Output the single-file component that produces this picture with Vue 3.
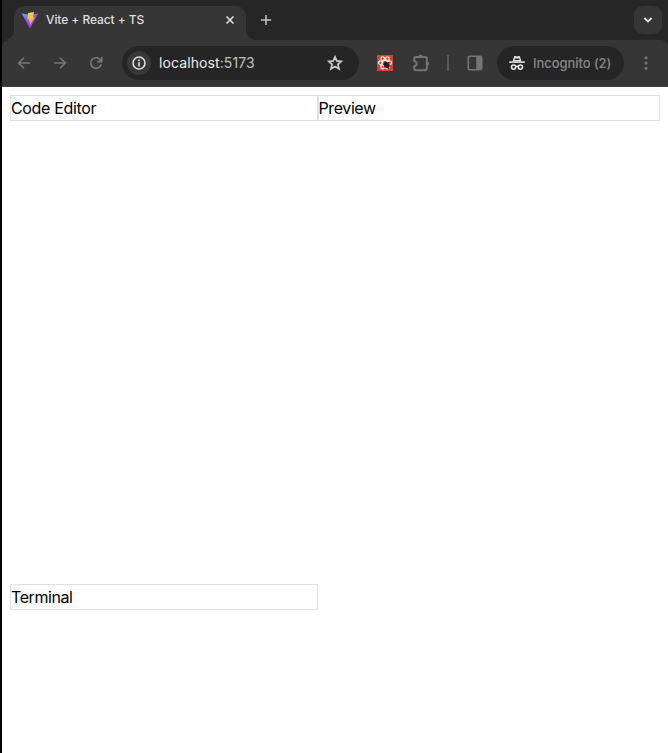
<script setup>
const title = 'Vite + React + TS'
</script>

<template>
  <div class="window">
    <header class="tabstrip">
      <div class="tab">
        <svg class="vite" width="18" height="18" viewBox="0 0 18 18">
          <defs>
            <linearGradient id="va" x1="0" y1="0" x2="0.6" y2="1">
              <stop offset="0" stop-color="#41c5ff" />
              <stop offset="0.4" stop-color="#7d62ff" />
              <stop offset="1" stop-color="#b62cfa" />
            </linearGradient>
            <linearGradient id="vb" x1="0" y1="0" x2="0" y2="1">
              <stop offset="0" stop-color="#ffd24a" />
              <stop offset="1" stop-color="#ffa313" />
            </linearGradient>
          </defs>
          <path d="M1 2.4 L9 3.8 L17 2.4 Q17.3 2.4 17 3.1 L9.4 16.7 Q9 17.2 8.6 16.7 L1 3.1 Q.7 2.4 1 2.4Z" fill="url(#va)" />
          <path d="M13 1 L7 2.1 L6.4 8.7 L8.3 8.3 L7.8 11.1 L9.3 10.7 L8.8 14.2 L13.8 6.5 L12 6.8 L13 1Z" fill="url(#vb)" />
        </svg>
        <span class="tab-title">{{ title }}</span>
        <svg class="close" width="10" height="10" viewBox="0 0 10 10"><path d="M1.5 1.5 L8.5 8.5 M8.5 1.5 L1.5 8.5" stroke="#dedede" stroke-width="1.6" fill="none" /></svg>
      </div>
      <svg class="plus" width="12" height="12" viewBox="0 0 12 12"><path d="M6 .9V11.1M.9 6H11.1" stroke="#c4c4c4" stroke-width="1.5" /></svg>
      <button class="tab-search">
        <svg width="10" height="8" viewBox="0 0 10 8"><path d="M1.4 2 L5 5.6 L8.6 2" fill="none" stroke="#e6e6e6" stroke-width="1.8" /></svg>
      </button>
    </header>

    <div class="toolbar">
      <nav class="nav">
        <svg width="16" height="16" viewBox="0 0 16 16"><path d="M14 8H3M8 2.7 L2.7 8 L8 13.3" /></svg>
        <svg width="16" height="16" viewBox="0 0 16 16"><path d="M2 8H13M8 2.7 L13.3 8 L8 13.3" /></svg>
        <svg width="16" height="16" viewBox="0 0 16 16"><path d="M13.2 9.2 A5.3 5.3 0 1 1 12.4 5 L13.5 6.3 M13.7 2V6.6H9.2" /></svg>
      </nav>
      <div class="omnibox">
        <span class="info">
          <svg width="14" height="14" viewBox="0 0 14 14"><circle cx="7" cy="7" r="6" fill="none" stroke="#dedede" stroke-width="1.6" /><path d="M7 6.2V10.4M7 3.5V5" stroke="#dedede" stroke-width="1.7" /></svg>
        </span>
        <span class="url">localhost<span class="port">:5173</span></span>
        <svg class="star" width="16" height="16" viewBox="0 0 16 16"><path d="M8 1.9 L9.8 6 L14.3 6.4 L10.9 9.4 L12 13.9 L8 11.5 L4 13.9 L5.1 9.4 L1.7 6.4 L6.2 6Z" fill="none" stroke="#c9c9c9" stroke-width="1.8" /></svg>
      </div>
      <svg class="ext" width="16" height="16" viewBox="0 0 16 16">
        <rect width="16" height="16" fill="#d8422f" />
        <g fill="none" stroke="#f7e8e6" stroke-width="1.3">
          <ellipse cx="8" cy="7.8" rx="6.6" ry="2.5" />
          <ellipse cx="8" cy="7.8" rx="6.6" ry="2.5" transform="rotate(60 8 7.8)" />
          <ellipse cx="8" cy="7.8" rx="6.6" ry="2.5" transform="rotate(120 8 7.8)" />
        </g>
        <ellipse cx="9.6" cy="10" rx="2.5" ry="3.4" transform="rotate(-35 9.6 10)" fill="#282020" />
        <path d="M6 9.2L13.2 10.3M7 12.4L12 7.2M8.1 6.4L11.6 13.9" stroke="#282020" stroke-width="1.1" />
      </svg>
      <svg class="puzzle" width="18" height="18" viewBox="0 0 18 18">
        <path d="M2.2 4.6Q2.2 3 3.8 3H13.2Q14.8 3 14.8 4.6V14.6Q14.8 16.2 13.2 16.2H3.8Q2.2 16.2 2.2 14.6V12.2Q4.6 12 4.6 9.7Q4.6 7.4 2.2 7.2Z" fill="none" stroke="#747474" stroke-width="1.9" />
        <path d="M6.4 2.8A2.1 2.1 0 0 1 10.6 2.8ZM15 7.6A2.1 2.1 0 0 1 15 11.8Z" fill="#747474" />
      </svg>
      <i class="divider"></i>
      <svg class="panel" width="16" height="16" viewBox="0 0 16 16"><rect x="1.3" y="1.3" width="13.4" height="13.4" rx="1.4" fill="none" stroke="#757575" stroke-width="1.6" /><path d="M9.2 1H15V15H9.2Z" fill="#757575" /></svg>
      <div class="incognito">
        <svg width="16" height="16" viewBox="0 0 16 16">
          <path d="M3.6 6.2L4.9 1.9Q5.2 .8 6.3 1.1L8 1.6L9.7 1.1Q10.8 .8 11.1 1.9L12.4 6.2Z" fill="#e6e6e6" />
          <path d="M5.9 3.6H10.1L10.5 5H5.5Z" fill="#252525" />
          <path d="M.2 6.3H15.8V7.9H.2Z" fill="#e6e6e6" />
          <g fill="none" stroke="#e6e6e6" stroke-width="1.6"><circle cx="4.6" cy="12.1" r="2.1" /><circle cx="11.4" cy="12.1" r="2.1" /><path d="M6.6 11.7Q8 10.8 9.4 11.7" /></g>
        </svg>
        <span class="incognito-label">Incognito (2)</span>
      </div>
      <svg class="menu" width="4" height="14" viewBox="0 0 4 14" fill="#747474"><circle cx="2" cy="1.7" r="1.55" /><circle cx="2" cy="7" r="1.55" /><circle cx="2" cy="12.3" r="1.55" /></svg>
    </div>

    <main class="page">
      <section class="pane code">Code Editor</section>
      <section class="pane preview">Preview</section>
      <section class="pane terminal">Terminal</section>
    </main>
  </div>
</template>

<style>
body { margin: 0; background: #fff; }
</style>

<style scoped>
* { box-sizing: border-box; }
svg { display: block; flex: none; }
.window {
  height: 753px;
  border-left: 2px solid #000;
  background: #fff;
  font-family: Inter, "Liberation Sans", sans-serif;
  overflow: hidden;
}
.tabstrip {
  height: 40px;
  background: #262626;
  display: flex;
  align-items: flex-start;
  padding: 6px 6px 0 12px;
}
.tab {
  position: relative;
  width: 232px;
  height: 34px;
  border-radius: 10px 10px 0 0;
  background: #363636;
  display: flex;
  align-items: center;
  padding: 0 11px 6px 7px;
}
.tab::before, .tab::after {
  content: "";
  position: absolute;
  bottom: 0;
  width: 10px;
  height: 10px;
}
.tab::before { left: -10px; background: radial-gradient(circle at 0 0, #262626 9.6px, #363636 10.4px); }
.tab::after { right: -10px; background: radial-gradient(circle at 100% 0, #262626 9.6px, #363636 10.4px); }
.tab-title { margin-left: 7px; font-size: 12px; font-weight: 500; letter-spacing: -0.08px; line-height: 16px; color: #dfdfdf; white-space: nowrap; }
.close { margin-left: auto; }
.plus { margin: 8px 0 0 14px; }
.tab-search {
  margin-left: auto;
  width: 28px;
  height: 28px;
  border: 0;
  padding: 0;
  border-radius: 9px;
  background: #363636;
  display: flex;
  align-items: center;
  justify-content: center;
}
.toolbar {
  height: 47px;
  background: #363636;
  border-bottom: 1px solid #433c40;
  display: flex;
  align-items: center;
  position: relative;
  padding-left: 14px;
}
.toolbar::before, .toolbar::after {
  content: "";
  position: absolute;
  top: 0;
  width: 8px;
  height: 8px;
}
.toolbar::before { left: 0; background: radial-gradient(circle at 100% 100%, #363636 7.6px, #262626 8.4px); }
.toolbar::after { right: 0; background: radial-gradient(circle at 0 100%, #363636 7.6px, #262626 8.4px); }
.nav { display: flex; gap: 20px; fill: none; stroke: #777; stroke-width: 1.6; width: 106px; }
.omnibox {
  width: 237px;
  height: 34px;
  border-radius: 17px;
  background: #252525;
  display: flex;
  align-items: center;
  padding: 0 16px 0 5px;
}
.info {
  width: 24px;
  height: 24px;
  border-radius: 50%;
  background: #383838;
  display: flex;
  align-items: center;
  justify-content: center;
}
.url { margin-left: 8px; font-size: 14px; letter-spacing: 0.1px; line-height: 20px; color: #ebebeb; white-space: nowrap; }
.port { color: #c1c1c1; }
.star { margin-left: auto; }
.ext { margin-left: 18px; }
.puzzle { margin-left: 19px; }
.divider { margin-left: 17px; width: 2px; height: 16px; background: #575757; }
.panel { margin-left: 18px; }
.incognito {
  margin-left: 14px;
  width: 127px;
  height: 34px;
  border-radius: 17px;
  background: #252525;
  display: flex;
  align-items: center;
  padding-left: 12px;
}
.incognito-label { margin-left: 8px; font-size: 13px; font-weight: 500; letter-spacing: -0.06px; line-height: 20px; color: #85888c; white-space: nowrap; }
.menu { margin-left: 20px; }
.page {
  height: 666px;
  padding: 8px;
  display: grid;
  grid-template-columns: 308px 1fr;
  grid-template-rows: 489px 1fr;
  align-items: start;
}
.pane {
  height: 26px;
  border: 1px solid #e0e1e4;
  font-size: 16px;
  line-height: 24px;
  letter-spacing: -0.34px;
  color: #000;
  white-space: nowrap;
}
.preview { text-indent: -0.5px; letter-spacing: -0.4px; }
.terminal { letter-spacing: -0.42px; }
</style>
